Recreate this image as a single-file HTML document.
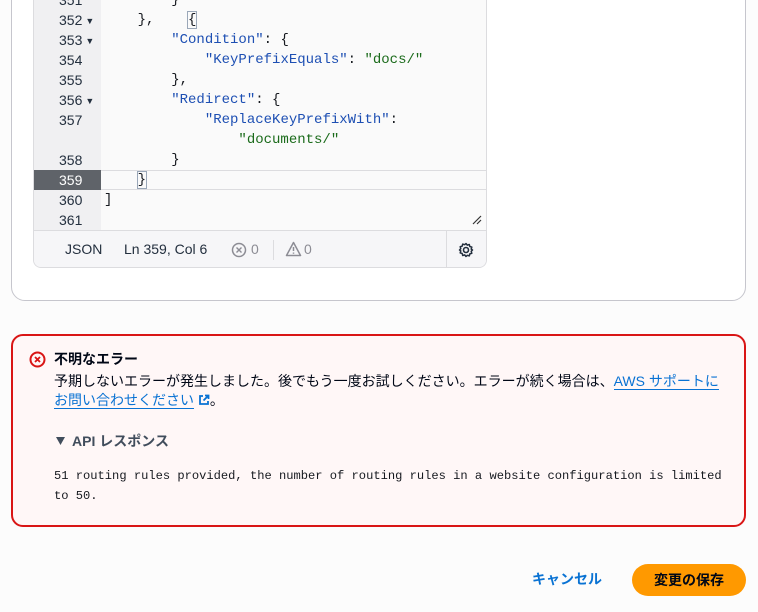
<!DOCTYPE html>
<html><head><meta charset="utf-8"><style>
*{margin:0;padding:0;box-sizing:border-box}
body{width:758px;height:612px;background:#fcfcfc;position:relative;overflow:hidden;font-family:"Liberation Sans","Noto Sans CJK JP",sans-serif;color:#000716}
.card{position:absolute;left:11px;top:-20px;width:735px;height:321px;background:#fff;border:1px solid #c6c6cd;border-radius:14px}
.ed{position:absolute;left:33px;top:-10px;width:454px;height:278px;border:1px solid #dcdcdf;border-top:none;border-radius:0 0 8px 8px;background:#fafafa;overflow:hidden}
.gut{position:absolute;left:0;top:0;width:67px;height:240px;background:#f0f0f2}
.ln{position:absolute;left:0;width:67px;height:20px;font:14px/20px "Liberation Sans",sans-serif;color:#232f3e;padding-left:25px}
.code{position:absolute;left:70px;height:20px;font:14px/20px "Liberation Mono",monospace;white-space:pre;color:#16191f}
.k{color:#1d4fb3}.s{color:#1b6b1b}
.tri{font-size:9px;margin-left:3px;vertical-align:1px}
.status{position:absolute;left:0;top:240px;width:454px;height:38px;border-top:1px solid #dcdcdf;background:#f6f6f8;font:14px "Liberation Sans",sans-serif;color:#232f3e}
.err{position:absolute;left:11px;top:334px;width:735px;height:193px;border:2px solid #d91515;border-radius:12px;background:#fff7f7}
.t{position:absolute;font-size:14px;line-height:19px;white-space:nowrap}
.mono{position:absolute;left:41px;top:130px;font-family:"Liberation Mono",monospace;font-size:12.1px;line-height:20px;white-space:pre;color:#16191f}
a{color:#0972d3;text-decoration:none;border-bottom:1px solid #0972d3}
</style></head><body>
<div class="card"></div>
<div class="ed">
<div class="gut"></div>
<div class="ln" style="top:0">351</div>
<div class="ln" style="top:20px">352<span class="tri">▼</span></div>
<div class="ln" style="top:40px">353<span class="tri">▼</span></div>
<div class="ln" style="top:60px">354</div>
<div class="ln" style="top:80px">355</div>
<div class="ln" style="top:100px">356<span class="tri">▼</span></div>
<div class="ln" style="top:120px">357</div>
<div class="ln" style="top:160px">358</div>
<div style="position:absolute;left:67px;top:180px;width:387px;height:20px;border-top:1px solid #dcdcdf;border-bottom:1px solid #dcdcdf"></div>
<div class="ln" style="top:180px;background:#5f6369;color:#fff">359</div>
<div class="ln" style="top:200px">360</div>
<div class="ln" style="top:220px">361</div>
<div class="code" style="top:0">        }</div>
<div class="code" style="top:20px">    },    <span style="outline:1px solid #9aa7b8">{</span></div>
<div class="code" style="top:40px">        <span class="k">"Condition"</span>: {</div>
<div class="code" style="top:60px">            <span class="k">"KeyPrefixEquals"</span>: <span class="s">"docs/"</span></div>
<div class="code" style="top:80px">        },</div>
<div class="code" style="top:100px">        <span class="k">"Redirect"</span>: {</div>
<div class="code" style="top:120px">            <span class="k">"ReplaceKeyPrefixWith"</span>:</div>
<div class="code" style="top:140px">                <span class="s">"documents/"</span></div>
<div class="code" style="top:160px">        }</div>
<div class="code" style="top:180px">    <span style="outline:1px solid #9aa7b8">}</span></div>
<div class="code" style="top:200px">]</div>
<svg style="position:absolute;left:438px;top:225px" width="10" height="10" viewBox="0 0 10 10"><path d="M1 9L9 1M5 9L9 5" stroke="#333" stroke-width="1.2"/></svg>
<div class="status">
<span style="position:absolute;left:31px;top:10px">JSON</span>
<span style="position:absolute;left:90px;top:10px">Ln 359, Col 6</span>
<svg style="position:absolute;left:197px;top:11px" width="16" height="16" viewBox="0 0 16 16"><circle cx="8" cy="8" r="6.5" fill="none" stroke="#8c8c94" stroke-width="1.5"/><path d="M5.5 5.5l5 5M10.5 5.5l-5 5" stroke="#8c8c94" stroke-width="1.4"/></svg>
<span style="position:absolute;left:217px;top:10px;color:#8c8c94">0</span>
<div style="position:absolute;left:239px;top:9px;width:1px;height:20px;background:#dcdcdf"></div>
<svg style="position:absolute;left:251px;top:10px" width="17" height="16" viewBox="0 0 17 16"><path d="M8.5 1.5L15.5 14.5H1.5Z" fill="none" stroke="#8c8c94" stroke-width="1.5" stroke-linejoin="round"/><path d="M8.5 6v4M8.5 11.5v1.3" stroke="#8c8c94" stroke-width="1.5"/></svg>
<span style="position:absolute;left:270px;top:10px;color:#8c8c94">0</span>
<div style="position:absolute;left:412px;top:0;width:1px;height:38px;background:#dcdcdf"></div>
<svg style="position:absolute;left:424px;top:11px" width="16" height="16" viewBox="0 0 16 16"><circle cx="8" cy="8" r="2.5" fill="none" stroke="#232f3e" stroke-width="1.6"/><path d="M8 1.5l1.3 1.6 2-.6.5 2 2 .6-.6 2L14.5 8l-1.3 1.3.6 2-2 .6-.5 2-2-.6L8 14.5l-1.3-1.6-2 .6-.5-2-2-.6.6-2L1.5 8l1.3-1.3-.6-2 2-.6.5-2 2 .6z" fill="none" stroke="#232f3e" stroke-width="1.5" stroke-linejoin="round"/></svg>
</div>
</div>
<div class="err">
<svg style="position:absolute;left:16px;top:15px" width="17" height="17" viewBox="0 0 17 17"><circle cx="8.5" cy="8.5" r="7" fill="none" stroke="#d91515" stroke-width="2"/><path d="M6 6l5 5M11 6l-5 5" stroke="#d91515" stroke-width="1.8"/></svg>
<div class="t" style="left:41px;top:14px;font-weight:bold">不明なエラー</div>
<div class="t" style="left:41px;top:36px">予期しないエラーが発生しました。後でもう一度お試しください。エラーが続く場合は、<a>AWS サポートに</a></div>
<div class="t" style="left:41px;top:55px"><a>お問い合わせください</a> <svg width="12" height="12" viewBox="0 0 12 12" style="vertical-align:-1px"><path d="M5 2H2v8h8V7M7 1.5h3.5V5M10.5 1.5L5.5 6.5" fill="none" stroke="#0972d3" stroke-width="1.8"/></svg>。</div>
<svg style="position:absolute;left:43px;top:101px" width="9" height="8" viewBox="0 0 9 8"><path d="M0 0h9L4.5 8z" fill="#414d5c"/></svg>
<div class="t" style="left:59px;top:96px;font-weight:bold;color:#414d5c">API レスポンス</div>
<div class="mono">51 routing rules provided, the number of routing rules in a website configuration is limited
to 50.</div>
</div>
<div class="t" style="left:532px;top:570px;color:#0972d3;font-weight:bold">キャンセル</div>
<div style="position:absolute;left:632px;top:564px;width:114px;height:32px;border-radius:16px;background:#ff9900;font-weight:bold;font-size:14px;line-height:32px;text-align:center;color:#000716">変更の保存</div>
</body></html>
